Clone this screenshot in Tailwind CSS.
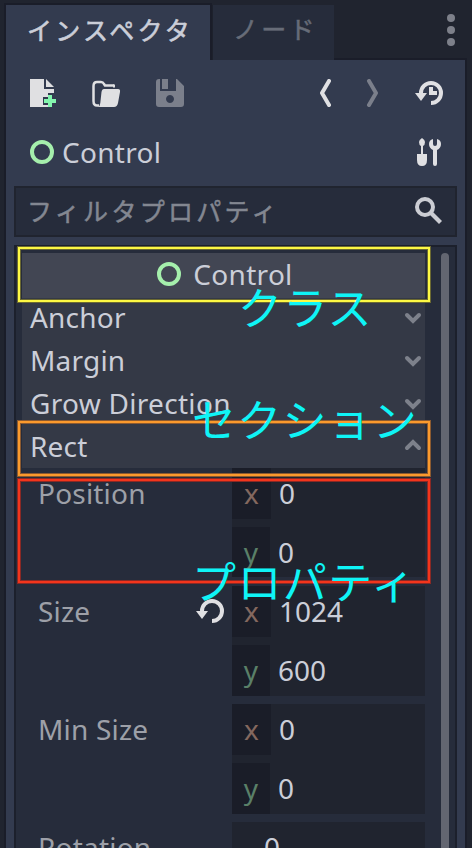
<!DOCTYPE html>
<html lang="ja">
<head>
<meta charset="utf-8">
<title>Inspector</title>
<script src="https://cdn.jsdelivr.net/npm/@tailwindcss/browser@4"></script>
</head>
<body class="w-[472px] h-[848px] overflow-hidden bg-[#20242f] font-['Noto_Sans','Noto_Sans_CJK_JP',sans-serif] text-[28px] leading-[43px] text-[#cbced8]">
<div class="relative w-[472px] h-[848px] overflow-hidden flex flex-col pl-1 pt-[3px] tracking-[0.2px]">
  <!-- Tabs -->
  <div class="flex h-[57px] shrink-0">
    <div class="w-[208px] h-[57px] bg-[#333b4f] border-t-2 border-x-2 border-[#1a1d29] pl-[21px] font-['Noto_Sans_CJK_JP',sans-serif] text-[25px] tracking-[3.2px] leading-[48px] whitespace-nowrap [-webkit-text-stroke:0.6px_#cbced8]">インスペクタ</div>
    <div class="w-[122px] h-[55px] mt-[2px] bg-[#262c3b] border-l border-[#1d212c] pl-[20px] font-['Noto_Sans_CJK_JP',sans-serif] text-[25px] tracking-[3.2px] leading-[47px] text-[#676c78] whitespace-nowrap [-webkit-text-stroke:0.5px_#676c78]">ノード</div>
    <div class="w-[133px] h-[57px] border-b-2 border-[#1a1d29] flex justify-end pr-[10px] pt-[11px]">
      <svg width="12" height="34" viewBox="0 0 12 34" fill="#7d808a"><circle cx="6" cy="4" r="4"/><circle cx="6" cy="16" r="4"/><circle cx="6" cy="28" r="4"/></svg>
    </div>
  </div>
  <!-- Panel -->
  <div class="w-[463px] h-[788px] shrink-0 bg-[#333b4f] border-x-2 border-[#1a1d29] flex flex-col">
    <div class="h-[66px] flex items-center pl-[24px] pr-[22px]">
      <svg width="28" height="28" viewBox="0 0 28 28"><path d="M0 0H14V10H24V14H18V18H13V26H18V28H0Z" fill="#e0e0e2"/><path d="M16 0 24 8H16Z" fill="#e0e0e2"/><path d="M18 16h4v4h4v4h-4v4h-4v-4h-4v-4h4z" fill="#84f6ae"/></svg>
      <svg class="ml-[34px]" width="30" height="28" viewBox="0 0 30 28"><path d="M7 26.500H5Q1.500 26.500 1.500 22V7Q1.500 3 5 3H9Q11 3 12 5L13 6.500H22" fill="none" stroke="#e0e0e2" stroke-width="2.500"/><path d="M22 5.500V8.500" stroke="#e0e0e2" stroke-width="2"/><path d="M12 10H26Q28.500 10 28 13L26 24Q25.200 28 22 28H6Q8 27 8.300 24L9.500 13Q10 10 12 10Z" fill="#e0e0e2"/></svg>
      <svg class="ml-[34px]" width="28" height="28" viewBox="0 0 28 28"><path fill-rule="evenodd" d="M3 0H4V12H20V0H21L28 7V25Q28 28 25 28H3Q0 28 0 25V3Q0 0 3 0ZM14 16a4 4 0 1 0 .01 0Z" fill="#7b7f8b"/><path d="M6 0h6v10H6z" fill="#7b7f8b"/></svg>
      <span class="grow"></span>
      <svg width="14" height="28" viewBox="0 0 14 28"><path d="M12 2 5 14 12 26" fill="none" stroke="#e0e0e3" stroke-width="4" stroke-linecap="round" stroke-linejoin="round"/></svg>
      <svg class="ml-[34px]" width="14" height="28" viewBox="0 0 14 28"><path d="M4 2 11 14 4 26" fill="none" stroke="#7b7f8b" stroke-width="4" stroke-linecap="round" stroke-linejoin="round"/></svg>
      <svg class="ml-[36px]" width="28" height="26" viewBox="0 0 28 26"><path d="M6 13A10 10 0 1 1 16 23" fill="none" stroke="#e0e0e3" stroke-width="4"/><path d="M0 13H12L6 21ZM14 7h4v4h4v4h-8z" fill="#e0e0e3"/></svg>
    </div>
    <div class="h-[54px] flex items-center pl-[24px] pr-[22px]">
      <svg class="-mt-[2px]" width="24" height="24" viewBox="0 0 24 24"><circle cx="12" cy="12" r="10" fill="none" stroke="#a5efac" stroke-width="4"/></svg>
      <span class="ml-[8px] -mt-[2px] tracking-[0.3px]">Control</span>
      <span class="grow"></span>
      <svg class="-mt-[2px]" width="26" height="28" viewBox="0 0 26 28" fill="#e0e0e3"><path d="M5 0Q8 2 8 4Q8 7 6 8V16H10V22Q10 28 5 28Q0 28 0 22V16H4V8Q2 7 2 4Q2 2 5 0Z"/><path d="M16 1V6Q16 8 18 8Q20 8 20 6V1Q24 2 24 6Q24 10 20 12V26Q20 28 18 28Q16 28 16 26V12Q12 10 12 6Q12 2 16 1Z"/></svg>
    </div>
    <div class="mx-2 mt-[6px] h-[51px] shrink-0 border-2 border-[#20242f] bg-[#262c3b] flex items-center justify-between pl-[11px] pr-[12px]">
      <span class="-mt-[2px] font-['Noto_Sans_CJK_JP',sans-serif] text-[25px] tracking-[3.300px] leading-[45px] text-[#838791] whitespace-nowrap [-webkit-text-stroke:0.5px_#838791]">フィルタプロパティ</span>
      <svg class="-mt-[2px]" width="28" height="28" viewBox="0 0 28 28"><circle cx="10" cy="10" r="8" fill="none" stroke="#cbcdd3" stroke-width="4"/><path d="M15 15 25.500 25.500" stroke="#cbcdd3" stroke-width="4.200"/></svg>
    </div>
    <!-- Property list -->
    <div class="mx-2 mt-[8px] h-[603px] shrink-0 border-2 border-b-0 border-[#1c202c] bg-[#262c3b] flex overflow-hidden">
      <div class="ml-[6px] w-[403px] mt-[6px] flex flex-col shrink-0">
        <div class="h-[45px] shrink-0 bg-[#424653] flex items-center justify-center pl-[3px]">
          <svg class="-mt-[3px]" width="24" height="24" viewBox="0 0 24 24"><circle cx="12" cy="12" r="10" fill="none" stroke="#a5efac" stroke-width="4"/></svg>
          <span class="ml-[12px] -mt-[2px] tracking-[0.3px]">Control</span>
        </div>
        <div class="h-[170px] shrink-0 bg-[#343946] flex flex-col pl-[8px] pr-[3px]">
          <div class="h-[41px] flex items-center justify-between"><span class="-mt-[2px]">Anchor</span><svg class="-mt-[2px]" width="18" height="12" viewBox="0 0 18 12"><path d="M3 3 9 9 15 3" fill="none" stroke="#7d818b" stroke-width="4" stroke-linecap="round"/></svg></div>
          <div class="h-[43px] flex items-center justify-between"><span class="-mt-[1px]">Margin</span><svg width="18" height="12" viewBox="0 0 18 12"><path d="M3 3 9 9 15 3" fill="none" stroke="#7d818b" stroke-width="4" stroke-linecap="round"/></svg></div>
          <div class="h-[43px] flex items-center justify-between"><span class="-mt-[1px] tracking-[0.3px]">Grow Direction</span><svg width="18" height="12" viewBox="0 0 18 12"><path d="M3 3 9 9 15 3" fill="none" stroke="#7d818b" stroke-width="4" stroke-linecap="round"/></svg></div>
          <div class="h-[43px] flex items-center justify-between"><span class="-mt-[1px]">Rect</span><svg class="-mt-[4px]" width="18" height="12" viewBox="0 0 18 12"><path d="M3 9 9 3 15 9" fill="none" stroke="#7d818b" stroke-width="4" stroke-linecap="round"/></svg></div>
        </div>
        <div class="h-[109px] shrink-0 flex">
          <div class="w-[210px] pl-[16px] pt-[4px] text-[#9da0a8]">Position</div>
          <div class="w-[193px] bg-[#20242f] flex flex-col gap-[8px]">
            <div class="h-[51px] flex"><span class="w-[39px] bg-[#1a1d28] text-center text-[#84685f] pt-[4px]">x</span><span class="pl-[8px] pt-[4px]">0</span></div>
            <div class="h-[50px] flex"><span class="w-[38px] bg-[#1a1d28] text-center text-[#5a8068] pt-[4px]">y</span><span class="pl-[8px] pt-[4px]">0</span></div>
          </div>
        </div>
        <div class="mt-[9px] h-[110px] shrink-0 flex">
          <div class="w-[210px] pl-[16px] pr-[8px] pt-[4px] text-[#9da0a8] flex justify-between">Size
            <svg class="mt-[8px]" width="28" height="26" viewBox="0 0 28 26"><path d="M6 13A10 10 0 1 1 16 23" fill="none" stroke="#e0e0e3" stroke-width="4"/><path d="M0 13H12L6 21Z" fill="#e0e0e3"/></svg>
          </div>
          <div class="w-[193px] bg-[#20242f] flex flex-col gap-[8px]">
            <div class="h-[51px] flex"><span class="w-[39px] bg-[#1a1d28] text-center text-[#84685f] pt-[4px]">x</span><span class="pl-[8px] pt-[4px] tracking-normal">1024</span></div>
            <div class="h-[51px] flex"><span class="w-[38px] bg-[#1a1d28] text-center text-[#5a8068] pt-[4px]">y</span><span class="pl-[8px] pt-[4px] tracking-normal">600</span></div>
          </div>
        </div>
        <div class="mt-[8px] h-[110px] shrink-0 flex">
          <div class="w-[210px] pl-[16px] pt-[4px] text-[#9da0a8]">Min Size</div>
          <div class="w-[193px] bg-[#20242f] flex flex-col gap-[8px]">
            <div class="h-[51px] flex"><span class="w-[39px] bg-[#1a1d28] text-center text-[#84685f] pt-[4px]">x</span><span class="pl-[8px] pt-[4px]">0</span></div>
            <div class="h-[51px] flex"><span class="w-[38px] bg-[#1a1d28] text-center text-[#5a8068] pt-[4px]">y</span><span class="pl-[8px] pt-[4px]">0</span></div>
          </div>
        </div>
        <div class="mt-[8px] h-[51px] shrink-0 flex">
          <div class="w-[210px] pl-[16px] pt-[4px] text-[#9da0a8]">Rotation</div>
          <div class="w-[193px] bg-[#20242f] pl-[32px] pt-[4px]">0</div>
        </div>
      </div>
      <div class="ml-[16px] mt-[6px] w-[8px] h-[620px] shrink-0 rounded-full bg-[#636671]"></div>
    </div>
  </div>
  <!-- Annotations -->
  <div class="absolute left-[17px] top-[246px] w-[414px] h-[57px] border-4 border-[#6c6a31]"></div>
  <div class="absolute left-[18px] top-[247px] w-[412px] h-[55px] border-2 border-[#fdf844]"></div>
  <div class="absolute left-[17px] top-[420px] w-[414px] h-[57px] border-4 border-[#8c5a30]"></div>
  <div class="absolute left-[18px] top-[421px] w-[412px] h-[55px] border-2 border-[#fb9a2d]"></div>
  <div class="absolute left-[17px] top-[478px] w-[414px] h-[106px] border-4 border-[#8a2925]"></div>
  <div class="absolute left-[18px] top-[479px] w-[412px] h-[104px] border-2 border-[#f3351c]"></div>
  <div class="absolute left-[238px] top-[276px] font-['Noto_Sans_CJK_JP',sans-serif] font-normal text-[44px] tracking-[1.2px] leading-[60px] text-[#0ff4f6] whitespace-nowrap">クラス</div>
  <div class="absolute left-[192px] top-[388px] font-['Noto_Sans_CJK_JP',sans-serif] font-normal text-[44px] tracking-[1.2px] leading-[60px] text-[#0ff4f6] whitespace-nowrap">セクション</div>
  <div class="absolute left-[192px] top-[550px] font-['Noto_Sans_CJK_JP',sans-serif] font-normal text-[44px] tracking-[1.4px] leading-[60px] text-[#0ff4f6] whitespace-nowrap">プロパティ</div>
</div>
</body>
</html>
